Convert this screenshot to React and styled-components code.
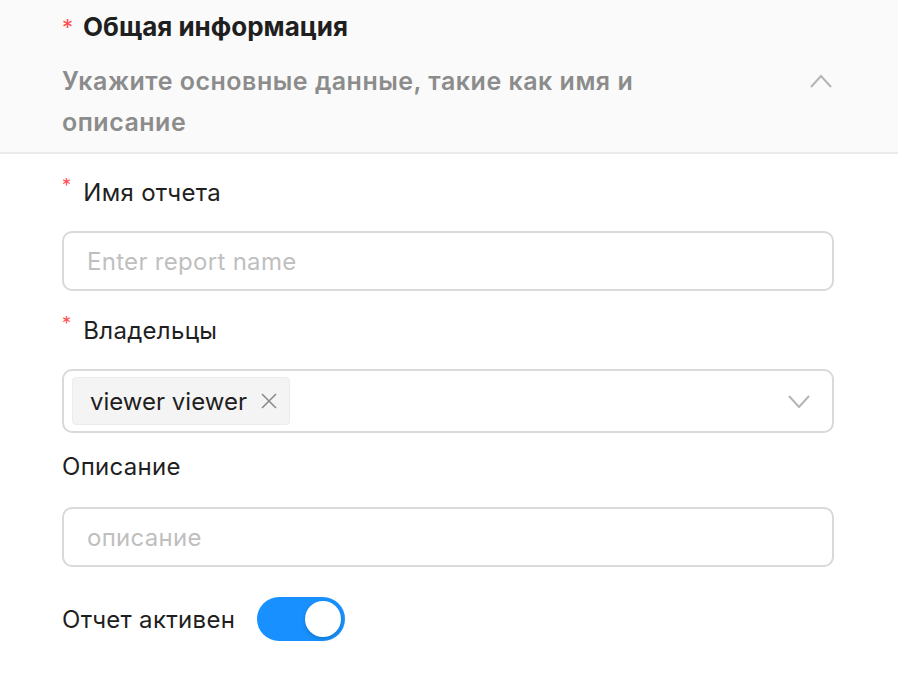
import React, { useState } from "react";
import styled, { createGlobalStyle } from "styled-components";

const GlobalStyle = createGlobalStyle`
  body {
    margin: 0;
    background: #ffffff;
    font-family: Inter, Roboto, "Noto Sans", "Liberation Sans", sans-serif;
    color: rgba(0, 0, 0, 0.88);
  }
`;

const Panel = styled.div`
  width: 898px;
  height: 680px;
  overflow: hidden;
`;

const Header = styled.div`
  background: #fafafa;
  border-bottom: 2px solid #ebebeb;
  padding: 9px 64px 9px 62px;
  display: flex;
  flex-direction: column;
`;

const Title = styled.div`
  font-size: 26px;
  font-weight: 700;
  line-height: 36px;
  color: #1f1f1f;
  display: flex;
  align-items: center;
`;

const HeadStar = styled.span`
  color: #ff4d4f;
  font-size: 22px;
  margin-right: 10px;
  font-weight: 400;
`;

const SubRow = styled.div`
  display: flex;
  justify-content: space-between;
  align-items: flex-start;
  margin-top: 16px;
`;

const Subtitle = styled.div`
  font-size: 25px;
  font-weight: 600;
  letter-spacing: 0.5px;
  line-height: 41px;
  color: #8c8c8c;
  width: 640px;
`;

const Chevron = styled.svg`
  width: 22px;
  height: 14px;
  margin-top: 13px;
  margin-right: 2px;
  flex: none;
`;

const Body = styled.div`
  padding: 21px 64px 0 62px;
  display: flex;
  flex-direction: column;
`;

const Field = styled.div`
  display: flex;
  flex-direction: column;
  margin-bottom: ${(p) => p.$after ?? 22}px;
`;

const Label = styled.label`
  font-size: 24px;
  letter-spacing: 0.3px;
  line-height: 36px;
  color: #1f1f1f;
  display: flex;
  align-items: flex-start;
  margin-bottom: ${(p) => p.$gap ?? 20}px;
`;

const Star = styled.span`
  color: #ff4d4f;
  font-size: 18px;
  line-height: 18px;
  margin-right: 12px;
  margin-top: 2px;
`;

const Input = styled.input`
  box-sizing: border-box;
  width: 100%;
  height: 60px;
  border: 2px solid #d9d9d9;
  border-radius: 10px;
  padding: 0 23px;
  font-family: inherit;
  font-size: 24px;
  letter-spacing: 0.3px;
  color: #1f1f1f;
  background: #fff;
  outline: none;
  &::placeholder {
    color: #bfbfbf;
  }
`;

const Select = styled.div`
  box-sizing: border-box;
  width: 100%;
  height: 64px;
  border: 2px solid #d9d9d9;
  border-radius: 10px;
  padding: 0 22px 0 8px;
  display: flex;
  align-items: center;
  justify-content: space-between;
`;

const Tag = styled.span`
  box-sizing: border-box;
  height: 48px;
  display: inline-flex;
  align-items: center;
  gap: 14px;
  padding: 0 12px 0 17px;
  background: #f4f4f4;
  border: 1px solid #ececec;
  border-radius: 4px;
  font-size: 24px;
  color: #1f1f1f;
`;

const Icon = styled.svg`
  flex: none;
`;

const SwitchRow = styled.div`
  display: flex;
  align-items: center;
  gap: 22px;
  font-size: 24px;
  letter-spacing: 0.3px;
  color: #1f1f1f;
  margin-top: 8px;
`;

const Switch = styled.button`
  width: 88px;
  height: 44px;
  border: none;
  border-radius: 22px;
  background: ${(p) => (p.$on ? "#1890ff" : "#bfbfbf")};
  position: relative;
  padding: 0;
  cursor: pointer;
  &::after {
    content: "";
    position: absolute;
    top: 4px;
    left: ${(p) => (p.$on ? "48px" : "4px")};
    width: 36px;
    height: 36px;
    border-radius: 50%;
    background: #fff;
    box-shadow: 0 2px 4px rgba(0, 35, 11, 0.2);
  }
`;

export default function App() {
  const [active, setActive] = useState(true);
  return (
    <Panel>
      <GlobalStyle />
      <Header>
        <Title>
          <HeadStar>*</HeadStar>Общая информация
        </Title>
        <SubRow>
          <Subtitle>Укажите основные данные, такие как имя и описание</Subtitle>
          <Chevron viewBox="0 0 22 14">
            <path d="M1 13 L11 2 L21 13" fill="none" stroke="#b5b5b5" strokeWidth="2" />
          </Chevron>
        </SubRow>
      </Header>
      <Body>
        <Field>
          <Label>
            <Star>*</Star>Имя отчета
          </Label>
          <Input placeholder="Enter report name" />
        </Field>
        <Field $after={16}>
          <Label>
            <Star>*</Star>Владельцы
          </Label>
          <Select>
            <Tag>
              viewer viewer
              <Icon width="16" height="16" viewBox="0 0 16 16">
                <path d="M1 1 L15 15 M15 1 L1 15" stroke="#8c8c8c" strokeWidth="1.6" fill="none" />
              </Icon>
            </Tag>
            <Icon width="22" height="14" viewBox="0 0 22 14">
              <path d="M1 2 L11 13 L21 2" fill="none" stroke="#b5b5b5" strokeWidth="2" />
            </Icon>
          </Select>
        </Field>
        <Field>
          <Label $gap={22}>Описание</Label>
          <Input placeholder="описание" />
        </Field>
        <SwitchRow>
          Отчет активен
          <Switch $on={active} onClick={() => setActive(!active)} />
        </SwitchRow>
      </Body>
    </Panel>
  );
}
